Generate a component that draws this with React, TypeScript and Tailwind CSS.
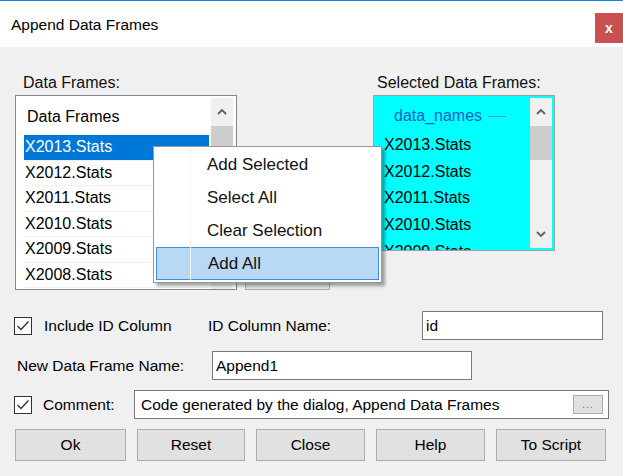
import React from 'react';

const leftItems = ['X2013.Stats', 'X2012.Stats', 'X2011.Stats', 'X2010.Stats', 'X2009.Stats', 'X2008.Stats'];
const rightItems = ['X2013.Stats', 'X2012.Stats', 'X2011.Stats', 'X2010.Stats', 'X2009.Stats'];
const menuItems = ['Add Selected', 'Select All', 'Clear Selection', 'Add All'];
const buttons = [
  { label: 'Ok', w: 'w-[111px]' },
  { label: 'Reset', w: 'w-[108px]' },
  { label: 'Close', w: 'w-[109px]' },
  { label: 'Help', w: 'w-[109px]' },
  { label: 'To Script', w: 'w-[110px]' },
];

const Chevron = ({ down = false }: { down?: boolean }) => (
  <svg width="10" height="6" viewBox="0 0 10 6" className="block">
    <polyline
      points={down ? '1,1 5,5 9,1' : '1,5 5,1 9,5'}
      fill="none"
      stroke="#606060"
      strokeWidth="1.8"
    />
  </svg>
);

const Check = () => (
  <div className="w-[18px] h-[18px] bg-white border border-[#333] flex items-center justify-center shrink-0">
    <svg width="14" height="12" viewBox="0 0 14 12">
      <polyline points="1.5,6 5,9.5 12.5,1.5" fill="none" stroke="#333" strokeWidth="1.3" />
    </svg>
  </div>
);

const ScrollBar = ({ thumbH, showDown }: { thumbH: string; showDown: boolean }) => (
  <div className="w-[22px] bg-[#f0f0f0] flex flex-col items-center shrink-0">
    <div className="h-[28px] shrink-0 flex items-center justify-center">
      <Chevron />
    </div>
    <div className={`w-[22px] shrink-0 ${thumbH} bg-[#cdcdcd]`} />
    <div className="flex-1" />
    {showDown && (
      <div className="h-[28px] shrink-0 flex items-center justify-center">
        <Chevron down />
      </div>
    )}
  </div>
);

export default function App() {
  return (
    <div
      className="w-[623px] h-[476px] bg-[#f0f0f0] relative overflow-hidden text-black"
      style={{ fontFamily: '"Liberation Sans", Arial, sans-serif' }}>
      {/* Title bar */}
      <div className="h-[47px] bg-white border-t border-[#1883d7] flex items-start justify-between">
        <div className="pl-[11px] pt-[12px] text-[15.5px] text-black">Append Data Frames</div>
        <div className="mt-[12px] w-[28px] h-[30px] bg-[#c75050] flex items-center justify-center text-white font-bold text-[14px]">
          x
        </div>
      </div>

      {/* Lists */}
      <div className="flex items-start pl-[15px] pt-[27px]">
        <div className="flex flex-col w-[222px] shrink-0">
          <div className="pl-[8px] h-[21px] text-[16px] leading-[18px] text-[#111]">Data Frames:</div>
          <div className="h-[195px] bg-white border border-[#828790] flex overflow-hidden">
            <div className="flex-1 flex flex-col pl-[8px] pt-[7px]">
              <div className="h-[32px] shrink-0 pl-[3px] text-[16px] leading-[28px]">Data Frames</div>
              {leftItems.map((item, i) => (
                <div
                  key={item}
                  className={`h-[25.5px] shrink-0 pl-[1px] text-[16px] leading-[24px] border-b border-[#f0f0f0] ${
                    i === 0 ? 'bg-[#0078d7] text-white' : 'text-black'
                  }`}>
                  {item}
                </div>
              ))}
            </div>
            <div className="pt-[2px] pr-[3px] pl-[2px] flex">
              <ScrollBar thumbH="h-[27px]" showDown={false} />
            </div>
          </div>
        </div>

        {/* button hidden behind the context menu */}
        <div className="ml-[8px] mt-[166px] w-[85px] h-[50px] shrink-0 bg-[#e1e1e1] border border-[#adadad]" />

        <div className="ml-[43px] flex flex-col w-[182px] shrink-0">
          <div className="pl-[4px] h-[21px] text-[16px] leading-[18px] text-[#111]">Selected Data Frames:</div>
          <div className="h-[156px] bg-[#00ffff] border border-[#a0a0a0] flex overflow-hidden">
            <div className="flex-1 flex flex-col pl-[10px] pt-[4px] overflow-hidden">
              <div className="h-[32px] shrink-0 pl-[10px] flex items-center text-[16px] text-[#1560c8]">
                data_names
                <span className="ml-[6px] w-[18px] h-px bg-[#4a8ed8]" />
              </div>
              {rightItems.map((item) => (
                <div key={item} className="h-[26.7px] shrink-0 text-[16px] leading-[26px] text-black">
                  {item}
                </div>
              ))}
            </div>
            <div className="pt-[2px] pr-[2px] pb-[2px] flex">
              <ScrollBar thumbH="h-[34px]" showDown />
            </div>
          </div>
        </div>
      </div>

      {/* Include ID / ID column name */}
      <div className="flex items-center pl-[14px] mt-[21px] h-[29px] whitespace-nowrap">
        <Check />
        <span className="ml-[12px] w-[164px] shrink-0 text-[15.5px]">Include ID Column</span>
        <span className="w-[214px] shrink-0 text-[15.5px]">ID Column Name:</span>
        <div className="w-[181px] h-[29px] shrink-0 bg-white border border-[#7a7a7a] flex items-center pl-[3px] text-[15.5px]">
          id
        </div>
      </div>

      {/* New data frame name */}
      <div className="flex items-center pl-[17px] mt-[11px] h-[29px] whitespace-nowrap">
        <span className="w-[195px] shrink-0 text-[15.5px]">New Data Frame Name:</span>
        <div className="w-[260px] h-[29px] shrink-0 bg-white border border-[#7a7a7a] flex items-center pl-[3px] text-[15.5px]">
          Append1
        </div>
      </div>

      {/* Comment */}
      <div className="flex items-center pl-[14px] mt-[10px] h-[29px] whitespace-nowrap">
        <Check />
        <span className="ml-[11px] w-[91px] shrink-0 text-[15.5px]">Comment:</span>
        <div className="w-[475px] h-[29px] shrink-0 bg-white border border-[#7a7a7a] flex items-center justify-between pl-[6px] pr-[5px] text-[15.5px]">
          <span>Code generated by the dialog, Append Data Frames</span>
          <div className="w-[30px] h-[19px] bg-[#e1e1e1] border border-[#adadad] flex items-center justify-center text-[10px] leading-none text-[#666] tracking-[1px]">
            ...
          </div>
        </div>
      </div>

      {/* Buttons */}
      <div className="flex items-center gap-[11px] pl-[15px] mt-[10px]">
        {buttons.map((b) => (
          <div
            key={b.label}
            className={`${b.w} h-[32px] shrink-0 bg-[#e1e1e1] border border-[#adadad] flex items-center justify-center text-[15.5px]`}>
            {b.label}
          </div>
        ))}
      </div>

      {/* Context menu */}
      <div className="absolute left-[153px] top-[146px] w-[229px] h-[137px] bg-white border border-[#979797] shadow-[3px_3px_3px_rgba(0,0,0,0.35)] flex flex-col pt-[1px] px-[2px]">
        <div className="absolute left-[36px] top-0 bottom-0 w-px bg-[#f3f3f3]" />
        {menuItems.map((m, i) => (
          <div
            key={m}
            className={`h-[33px] shrink-0 flex items-center pl-[51px] text-[17px] text-[#111] ${
              i === 3 ? 'bg-[#b9d8f4] border border-[#3d8ee0] pl-[50px]' : ''
            }`}>
            {m}
          </div>
        ))}
      </div>
    </div>
  );
}
